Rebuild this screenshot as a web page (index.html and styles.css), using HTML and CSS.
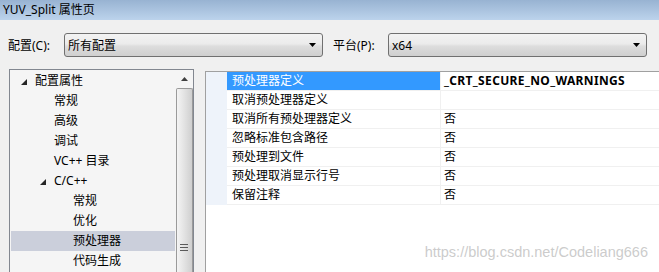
FILE: index.html
```html
<!DOCTYPE html>
<html lang="zh-CN">
<head>
  <meta charset="UTF-8" />
  <title>YUV_Split 属性页</title>
  <link rel="stylesheet" href="styles.css">
</head>
<body>
  <div class="titlebar">YUV_Split 属性页</div>

  <div class="config-row">
    <label class="config-label">配置(C):</label>
    <div class="combo">
      <span>所有配置</span>
      <svg class="combo-arrow" width="7" height="4" viewBox="0 0 7 4"><polygon points="0,0 7,0 3.5,4" fill="#000"/></svg>
    </div>
    <label class="config-label platform">平台(P):</label>
    <div class="combo">
      <span>x64</span>
      <svg class="combo-arrow" width="7" height="4" viewBox="0 0 7 4"><polygon points="0,0 7,0 3.5,4" fill="#000"/></svg>
    </div>
  </div>

  <div class="main">
    <div class="tree">
      <ul class="tree-list">
        <li class="node lvl0"><svg class="twisty" width="6" height="6" viewBox="0 0 6 6"><polygon points="6,0 6,6 0,6" fill="#262626"/></svg>配置属性</li>
        <li class="node lvl1">常规</li>
        <li class="node lvl1">高级</li>
        <li class="node lvl1">调试</li>
        <li class="node lvl1">VC++ 目录</li>
        <li class="node lvl1 has-kids"><svg class="twisty" width="6" height="6" viewBox="0 0 6 6"><polygon points="6,0 6,6 0,6" fill="#262626"/></svg>C/C++</li>
        <li class="node lvl2">常规</li>
        <li class="node lvl2">优化</li>
        <li class="node lvl2 selected">预处理器</li>
        <li class="node lvl2">代码生成</li>
      </ul>
      <div class="scrollbar">
        <div class="scroll-btn">
          <svg width="7" height="4" viewBox="0 0 7 4"><polygon points="3.5,0 7,4 0,4" fill="#404040"/></svg>
        </div>
        <div class="scroll-thumb">
          <div class="grip"><span></span><span></span><span></span></div>
        </div>
      </div>
    </div>

    <div class="grid">
      <div class="row">
        <div class="gutter"></div>
        <div class="name active">预处理器定义</div>
        <div class="value bold">_CRT_SECURE_NO_WARNINGS</div>
      </div>
      <div class="row">
        <div class="gutter"></div>
        <div class="name">取消预处理器定义</div>
        <div class="value"></div>
      </div>
      <div class="row">
        <div class="gutter"></div>
        <div class="name">取消所有预处理器定义</div>
        <div class="value">否</div>
      </div>
      <div class="row">
        <div class="gutter"></div>
        <div class="name">忽略标准包含路径</div>
        <div class="value">否</div>
      </div>
      <div class="row">
        <div class="gutter"></div>
        <div class="name">预处理到文件</div>
        <div class="value">否</div>
      </div>
      <div class="row">
        <div class="gutter"></div>
        <div class="name">预处理取消显示行号</div>
        <div class="value">否</div>
      </div>
      <div class="row">
        <div class="gutter"></div>
        <div class="name">保留注释</div>
        <div class="value">否</div>
      </div>
    </div>
  </div>

  <div class="watermark">https://blog.csdn.net/Codeliang666</div>
</body>
</html>
```

FILE: styles.css
```css
html, body {
  margin: 0;
  height: 100%;
  overflow: hidden;
}

body {
  background: #f0f0f0;
  font-family: 'Segoe UI', 'Noto Sans', 'Noto Sans CJK SC', sans-serif;
  font-size: 12px;
  color: #000;
  position: relative;
}

.titlebar {
  height: 20px;
  line-height: 20px;
  padding-left: 3px;
  background: linear-gradient(#98b3d2, #bcd3ec);
  font-size: 12px;
}

.config-row {
  display: flex;
  align-items: center;
  margin-top: 13px;
  padding-left: 8px;
  height: 24px;
}

.config-label {
  width: 56px;
}

.config-label.platform {
  margin-left: 10px;
  width: 55px;
}

.combo {
  width: 259px;
  height: 24px;
  box-sizing: border-box;
  border: 1px solid #707070;
  border-radius: 3px;
  background: linear-gradient(#f3f3f3 0%, #ebebeb 45%, #dddddd 55%, #cfcfcf 100%);
  display: flex;
  align-items: center;
  justify-content: space-between;
  padding: 0 6px 0 3px;
}

.main {
  display: flex;
  align-items: flex-start;
  margin-top: 12px;
  padding-left: 9px;
}

.tree {
  width: 185px;
  height: 203px;
  box-sizing: border-box;
  border: 1px solid #828790;
  border-bottom: none;
  background: #f5f5f5;
  display: flex;
  flex-shrink: 0;
}

.tree-list {
  list-style: none;
  margin: 0;
  padding: 1px 0 0 1px;
  width: 165px;
}

.node {
  height: 20px;
  line-height: 20px;
  display: flex;
  align-items: center;
}

.node.lvl0 { padding-left: 10px; }
.node.lvl1 { padding-left: 43px; }
.node.lvl1.has-kids { padding-left: 29px; }
.node.lvl2 { padding-left: 62px; }

.twisty {
  margin-right: 8px;
  margin-top: 2px;
}

.node.selected {
  background: #cbcfdb;
}

.scrollbar {
  width: 17px;
  margin-left: 1px;
  display: flex;
  flex-direction: column;
}

.scroll-btn {
  height: 17px;
  display: flex;
  align-items: center;
  justify-content: center;
}

.scroll-thumb {
  flex: 1;
  margin-top: 1px;
  border: 1px solid #9a9a9a;
  border-bottom: none;
  border-radius: 2px 2px 0 0;
  background: linear-gradient(90deg, #f4f4f4, #e2e2e2 50%, #cfcfcf);
  position: relative;
}

.grip {
  position: absolute;
  left: 3px;
  top: 155px;
  display: flex;
  flex-direction: column;
  gap: 2px;
}

.grip span {
  display: block;
  width: 8px;
  height: 1px;
  background: #5a5a5a;
}

.grid {
  flex: 1;
  margin-left: 11px;
  margin-top: 2px;
  height: 201px;
  box-sizing: border-box;
  background: #fff;
  border-top: 1px solid #a0a0a0;
  border-left: 1px solid #a0a0a0;
}

.row {
  display: flex;
  height: 19px;
  box-sizing: border-box;
  border-bottom: 1px solid #f0f0f0;
}

.gutter {
  width: 21px;
  background: #eef3fa;
  margin-bottom: -1px;
}

.name {
  width: 214px;
  padding-left: 5px;
  box-sizing: border-box;
  line-height: 18px;
  border-right: 1px solid #f0f0f0;
}

.name.active {
  background: #3399ff;
  color: #fff;
}

.value {
  padding-left: 3px;
  line-height: 18px;
}

.value.bold {
  font-weight: bold;
  letter-spacing: 0.35px;
}

.watermark {
  position: absolute;
  right: 11px;
  top: 244px;
  font-family: 'Liberation Sans', Arial, sans-serif;
  font-size: 14.5px;
  color: rgba(190, 190, 190, 0.8);
}
```
